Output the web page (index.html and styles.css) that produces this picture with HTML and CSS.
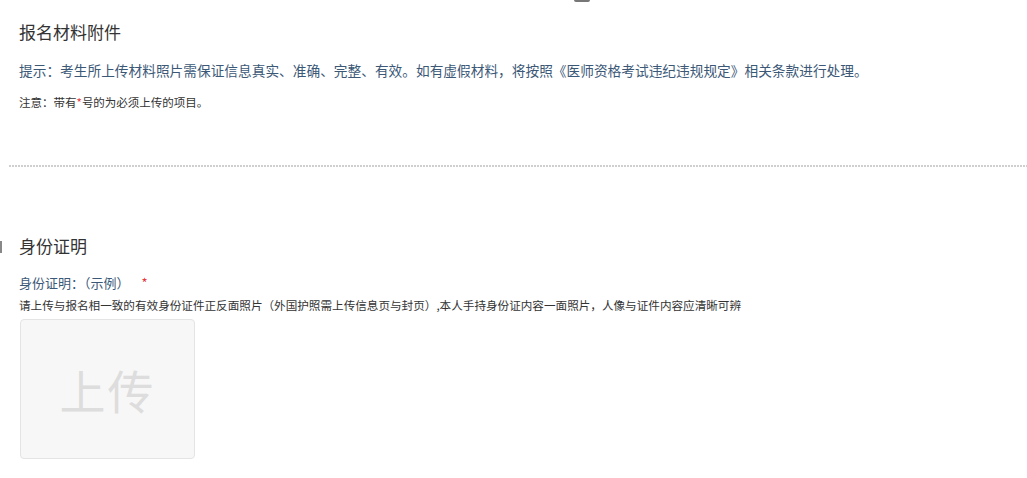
FILE: index.html
```html
<!DOCTYPE html>
<html lang="zh-CN">
<head>
<meta charset="utf-8">
<title>报名材料附件</title>
<link rel="stylesheet" href="styles.css">
</head>
<body>
<span class="mark-top"></span>
<span class="mark-left"></span>
<div class="page">
  <section class="intro">
    <h2 class="title">报名材料附件</h2>
    <p class="tip">提示：考生所上传材料照片需保证信息真实、准确、完整、有效。如有虚假材料，将按照《医师资格考试违纪违规规定》相关条款进行处理。</p>
    <p class="note">注意：带有<span class="star">*</span>号的为必须上传的项目。</p>
  </section>
  <div class="divider"></div>
  <section class="group">
    <h2 class="title">身份证明</h2>
    <div class="label">身份证明：（示例）<span class="req">*</span></div>
    <p class="desc">请上传与报名相一致的有效身份证件正反面照片（外国护照需上传信息页与封页）,本人手持身份证内容一面照片，人像与证件内容应清晰可辨</p>
    <div class="upload">上传</div>
  </section>
</div>
</body>
</html>
```
FILE: styles.css
```css
html, body {
  margin: 0;
  padding: 0;
  background: #ffffff;
}
body {
  font-family: "Noto Sans CJK SC", "Noto Sans", sans-serif;
  color: #333333;
  position: relative;
  width: 1027px;
  height: 478px;
  overflow: hidden;
}
.mark-top {
  position: absolute;
  left: 574px;
  top: 0;
  width: 16px;
  height: 2px;
  background: #777;
  border-radius: 0 0 2px 2px;
}
.mark-left {
  position: absolute;
  left: 0;
  top: 241px;
  width: 2px;
  height: 12px;
  background: #888;
}
.page {
  padding: 0 0 0 19px;
}
.title {
  margin: 0;
  font-size: 17px;
  font-weight: normal;
  line-height: 24px;
  color: #333333;
}
.intro {
  padding-top: 20px;
}
.tip {
  margin: 16px 0 0 0;
  font-size: 13.7px;
  line-height: 20px;
  color: #3b5877;
}
.note {
  margin: 14px 0 0 0;
  font-size: 11.5px;
  line-height: 16px;
  color: #333333;
}
.star {
  color: #e4393c;
}
.divider {
  margin: 55px 0 0 -10px;
  height: 2px;
  background: repeating-linear-gradient(90deg, #cfcfcf 0 2px, transparent 2px 3px);
}
.group {
  padding-top: 67px;
}
.label {
  margin-top: 16px;
  font-size: 13px;
  line-height: 18px;
  color: #3b5877;
}
.req {
  color: #e4393c;
  margin-left: 12px;
}
.desc {
  margin: 5px 0 0 0;
  font-size: 11.6px;
  line-height: 16px;
  color: #333333;
}
.upload {
  margin: 6px 0 0 1px;
  width: 175px;
  height: 140px;
  box-sizing: border-box;
  border: 1px solid #e4e4e4;
  border-radius: 4px;
  background: #f7f7f7;
  color: #dddddd;
  font-size: 46px;
  display: flex;
  align-items: center;
  justify-content: center;
  letter-spacing: 2px;
}
```
